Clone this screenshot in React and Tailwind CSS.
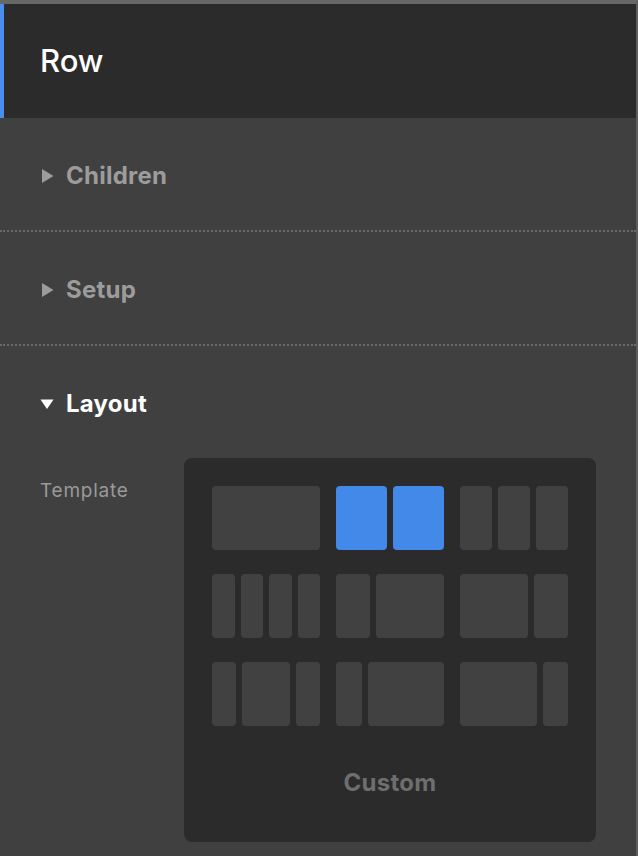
const ROWS = [
  [[1], [1, 1], [1, 1, 1]],
  [[1, 1, 1, 1], [1, 2], [2, 1]],
  [[1, 2, 1], [1, 3], [3, 1]],
];

const GROW = { 1: 'flex-1', 2: 'flex-[2_2_0%]', 3: 'flex-[3_3_0%]' };

function Caret({ open }) {
  return open ? (
    <svg width="14" height="12" viewBox="0 0 14 12" className="shrink-0">
      <polygon points="0.5,1.5 13.5,1.5 7,11" fill="#fff" />
    </svg>
  ) : (
    <svg width="12" height="14" viewBox="0 0 12 14" className="shrink-0">
      <polygon points="0,0 11.5,7 0,14" fill="#9c9c9c" />
    </svg>
  );
}

function Section({ title, open }) {
  return (
    <div className={`h-[112px] flex items-center pt-[3px] ${open ? 'pl-10' : 'pl-[42px]'}`}>
      <Caret open={open} />
      <span
        className={`font-bold text-[24px] tracking-[0.01em] ml-[12px] ${open ? 'text-white' : 'text-[#9c9c9c]'}`}
      >
        {title}
      </span>
    </div>
  );
}

export default function App() {
  return (
    <div
      className="w-[638px] h-[856px] bg-[#404040] border-t-4 border-t-[#676767] border-r-2 border-r-[#5e5e5e] overflow-hidden"
      style={{ fontFamily: 'Inter, "Noto Sans", sans-serif' }}
    >
      <div className="h-[114px] bg-[#2b2b2b] border-l-4 border-[#4a8ef0] flex items-center pl-[36px]">
        <span className="text-white text-[31px] font-medium">Row</span>
      </div>

      <div className="border-b-2 border-dotted border-[#6a6a6a]">
        <Section title="Children" />
      </div>
      <div className="border-b-2 border-dotted border-[#6a6a6a]">
        <Section title="Setup" />
      </div>
      <Section title="Layout" open />

      <div className="flex px-10">
        <div className="w-[144px] pt-[19px] text-[19px] tracking-[0.04em] text-[#9a9a9a]">Template</div>
        <div className="w-[412px] h-[384px] bg-[#2b2b2b] rounded-lg px-7 pt-7 flex flex-col">
          <div className="flex flex-col gap-6">
            {ROWS.map((row, r) => (
              <div key={r} className="flex gap-4 h-16">
                {row.map((group, g) => (
                  <div key={g} className="flex-1 flex gap-1.5">
                    {group.map((w, i) => (
                      <div
                        key={i}
                        className={`${GROW[w]} rounded ${r === 0 && g === 1 ? 'bg-[#4289ea]' : 'bg-[#414141]'}`}
                      />
                    ))}
                  </div>
                ))}
              </div>
            ))}
          </div>
          <div className="flex-1 flex items-center justify-center pb-[2px]">
            <span className="text-[24px] font-bold tracking-[0.01em] text-[#6e6e6e]">Custom</span>
          </div>
        </div>
      </div>
    </div>
  );
}
